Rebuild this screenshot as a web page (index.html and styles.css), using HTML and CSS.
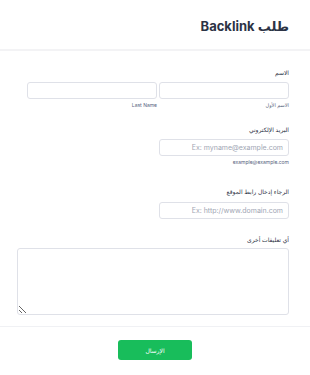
FILE: index.html
```html
<!DOCTYPE html>
<html lang="ar" dir="rtl">
<head>
  <meta charset="UTF-8">
  <meta name="viewport" content="width=device-width, initial-scale=1.0">
  <title>طلب Backlink</title>
  <link rel="stylesheet" href="styles.css">
</head>
<body>
  <header class="form-header">
    <h1>طلب Backlink</h1>
  </header>

  <form class="form-body">
    <div class="field field-name">
      <label>الاسم</label>
      <div class="name-row">
        <div class="name-col">
          <input type="text">
          <span class="sublabel">الاسم الأول</span>
        </div>
        <div class="name-col">
          <input type="text">
          <span class="sublabel">Last Name</span>
        </div>
      </div>
    </div>

    <div class="field field-email">
      <label>البريد الإلكتروني</label>
      <input type="email" class="short" placeholder="Ex: myname@example.com">
      <span class="sublabel">example@example.com</span>
    </div>

    <div class="field field-url">
      <label>الرجاء إدخال رابط الموقع</label>
      <input type="text" class="short" placeholder="Ex: http://www.domain.com">
    </div>

    <div class="field field-comments">
      <label>أي تعليقات أخرى</label>
      <textarea></textarea>
    </div>

    <div class="form-footer">
      <button type="button" class="submit-btn">الإرسال</button>
    </div>
  </form>
</body>
</html>
```

FILE: styles.css
```css
body {
  margin: 0;
  font-family: Inter, "Noto Sans", "DejaVu Sans", sans-serif;
  background: #fff;
  color: #2c3345;
}
.form-header {
  height: 51px;
  border-bottom: 2px solid #f3f3f5;
  box-sizing: border-box;
  display: flex;
  align-items: center;
  padding: 2px 21px 0;
}
.form-header h1 {
  margin: 0;
  font-size: 13px;
  font-weight: 700;
  color: #2c3345;
}
.form-body {
  padding-top: 18px;
}
.field {
  display: flex;
  flex-direction: column;
  align-items: flex-start;
  padding: 0 21px 0 21px;
}
.field label {
  font-size: 6px;
  line-height: 8px;
  color: #2c3345;
  margin-bottom: 5px;
}
input,
textarea {
  box-sizing: border-box;
  border: 1px solid #dfe1e8;
  border-radius: 3px;
  height: 17px;
  font-family: inherit;
  font-size: 7px;
  padding: 0 5px;
  color: #2c3345;
  background: #fff;
}
input::placeholder {
  color: #a0a6b4;
}
.short {
  width: 130px;
}
.name-row {
  display: flex;
  gap: 2px;
  width: 262px;
}
.name-col {
  flex: 1;
  display: flex;
  flex-direction: column;
}
.name-col input {
  width: 100%;
}
.sublabel {
  font-size: 5px;
  line-height: 7px;
  margin-top: 3px;
  color: #57647e;
}
.field-name {
  margin-bottom: 17px;
}
.field-email {
  margin-bottom: 22px;
}
.field-url {
  margin-bottom: 17px;
}
.field-url label {
  margin-bottom: 6px;
}
.field-comments label {
  margin-bottom: 4px;
}
textarea {
  width: 272px;
  height: 67px;
  margin-left: -10px;
}
.form-footer {
  margin-top: 11px;
  border-top: 1px solid #f0f1f4;
  display: flex;
  justify-content: center;
  padding-top: 13px;
}
.submit-btn {
  width: 74px;
  height: 20px;
  border: none;
  border-radius: 3px;
  background: #18bd5b;
  color: #fff;
  font-family: inherit;
  font-size: 6px;
  cursor: pointer;
}
```
